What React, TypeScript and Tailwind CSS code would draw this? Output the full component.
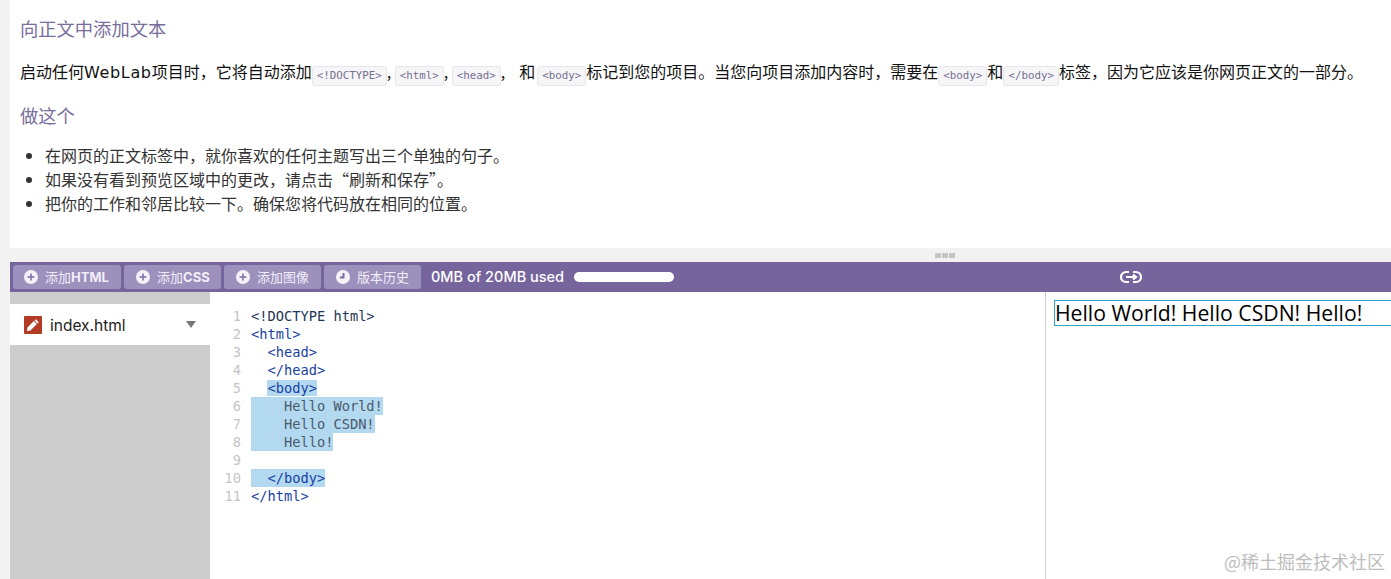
import React from 'react';
import { Plus } from 'lucide-react';

const CJK = '"Noto Sans CJK SC", sans-serif';

const toolbarButtons = [
  { label: '添加', bold: 'HTML', icon: 'plus', width: 'w-[108px]', pad: 'pl-[11px]' },
  { label: '添加', bold: 'CSS', icon: 'plus', width: 'w-[97px]', pad: 'pl-[12px]' },
  { label: '添加图像', bold: '', icon: 'plus', width: 'w-[97px]', pad: 'pl-[12px]' },
  { label: '版本历史', bold: '', icon: 'clock', width: 'w-[97px]', pad: 'pl-[12px]' },
];

const codeLines: { indent: string; text: string; kind: 'tag' | 'doc' | 'text'; sel?: 'text' | 'full' }[] = [
  { indent: '', text: '<!DOCTYPE html>', kind: 'doc' },
  { indent: '', text: '<html>', kind: 'tag' },
  { indent: '  ', text: '<head>', kind: 'tag' },
  { indent: '  ', text: '</head>', kind: 'tag' },
  { indent: '  ', text: '<body>', kind: 'tag', sel: 'text' },
  { indent: '    ', text: 'Hello World!', kind: 'text', sel: 'full' },
  { indent: '    ', text: 'Hello CSDN!', kind: 'text', sel: 'full' },
  { indent: '    ', text: 'Hello!', kind: 'text', sel: 'full' },
  { indent: '', text: '', kind: 'text' },
  { indent: '  ', text: '</body>', kind: 'tag', sel: 'full' },
  { indent: '', text: '</html>', kind: 'tag' },
];

const Code = ({ children }: { children: React.ReactNode }) => (
  <code className="inline-block h-[20px] px-[4px] align-[-1px] rounded-[3px] border border-[#e6e6ec] bg-[#f6f6f9] text-[10.8px] leading-[18px] text-[#75708f] font-['DejaVu_Sans_Mono',monospace]">
    {children}
  </code>
);

const ToolbarButton = ({ label, bold, icon, width, pad }: { label: string; bold: string; icon: string; width: string; pad: string }) => (
  <div className={`${width} ${pad} h-[24px] flex items-center rounded-[3px] bg-[#9c90bd] text-white text-[13px]`}>
    {icon === 'plus' ? (
      <span className="w-[14px] h-[14px] rounded-full bg-[#f4f2f8] flex items-center justify-center">
        <Plus className="w-[10px] h-[10px] text-[#7a6aa3]" strokeWidth={3.5} />
      </span>
    ) : (
      <svg className="w-[14px] h-[14px]" viewBox="0 0 14 14">
        <circle cx="7" cy="7" r="7" fill="#f4f2f8" />
        <path d="M7.5 3v4.4H4" fill="none" stroke="#7a6aa3" strokeWidth="2" />
      </svg>
    )}
    <span className="ml-[7px] whitespace-nowrap text-[#f1eef7]">
      {label}
      {bold && <span className="font-bold font-['Inter',sans-serif] text-[13px]">{bold}</span>}
    </span>
  </div>
);

const App = () => {
  return (
    <div className="w-[1391px] h-[579px] overflow-hidden relative flex flex-col bg-[#f2f2f2] pl-[10px]" style={{ fontFamily: CJK }}>
      {/* instructions */}
      <div className="h-[248px] shrink-0 bg-white px-[10px]">
        <h2 className="pt-[15px] text-[18.3px] leading-[26px] text-[#786d9c]">向正文中添加文本</h2>
        <p className="mt-[17px] text-[16px] leading-[26px] text-[#111] whitespace-nowrap">
          启动任何<span className="font-['DejaVu_Sans',sans-serif] tracking-[0.65px]">WebLab</span>项目时，它将自动添加<Code>&lt;!DOCTYPE&gt;</Code>,&nbsp;<Code>&lt;html&gt;</Code>,&nbsp;<Code>&lt;head&gt;</Code>,<span className="ml-[14px]">和</span><span className="ml-[2px]" /><Code>&lt;body&gt;</Code>标记到您的项目。当您向项目添加内容时，需要在<Code>&lt;body&gt;</Code>和<Code>&lt;/body&gt;</Code>标签，因为它应该是你网页正文的一部分。
        </p>
        <h2 className="mt-[16px] text-[18.3px] leading-[26px] text-[#786d9c]">做这个</h2>
        <ul className="mt-[15px] pl-[25px] list-disc text-[16px] leading-[24px] text-[#333]">
          <li>在网页的正文标签中，就你喜欢的任何主题写出三个单独的句子。</li>
          <li>如果没有看到预览区域中的更改，请点击“刷新和保存”。</li>
          <li>把你的工作和邻居比较一下。确保您将代码放在相同的位置。</li>
        </ul>
      </div>

      {/* resize handle */}
      <div className="h-[14px] shrink-0 flex items-center justify-center pl-[489px] gap-px">
        <span className="w-[6px] h-[5px] bg-[#c6c6c6]" />
        <span className="w-[6px] h-[5px] bg-[#c6c6c6]" />
        <span className="w-[6px] h-[5px] bg-[#c6c6c6]" />
      </div>

      {/* toolbar */}
      <div className="h-[30px] shrink-0 flex items-center bg-[#76659d] pl-[3px] gap-[3px]">
        {toolbarButtons.map((b) => (
          <ToolbarButton key={b.label + b.bold} {...b} />
        ))}
        <span className="ml-[7px] w-[133px] text-[14.5px] font-medium text-white whitespace-nowrap font-['Inter',sans-serif]">0MB of 20MB used</span>
        <span className="ml-[7px] w-[100px] h-[10px] rounded-full bg-white" />
        <svg className="ml-[443px] w-[22px] h-[14px]" viewBox="0 0 22 14" fill="none" stroke="#fff" strokeWidth="2.2">
          <path d="M9 2H6a5 5 0 0 0 0 10h3" />
          <path d="M13 2h3a5 5 0 0 1 0 10h-3" />
          <path d="M6 7h10M13 4.5l3 2.5-3 2.5" />
        </svg>
      </div>

      {/* workspace */}
      <div className="flex-1 flex min-h-0 bg-white">
        <div className="w-[200px] shrink-0 bg-[#cccccc] pt-[12px]">
          <div className="h-[41px] bg-white flex items-center pl-[14px] pr-[14px]">
            <span className="w-[18px] h-[18px] rounded-[1px] bg-[#b23c25] flex items-center justify-center">
              <svg className="w-[14px] h-[14px]" viewBox="0 0 14 14" fill="#fff">
                <path d="M9.8 1.2l3 3-1.2 1.2-3-3zM7.9 3.1l3 3-6.4 6.4-3.6.6.6-3.6z" />
              </svg>
            </span>
            <span className="ml-[8px] pt-[2px] text-[15.5px] text-[#222] font-['Inter',sans-serif]">index.html</span>
            <span className="ml-auto w-0 h-0 border-x-[5.5px] border-x-transparent border-t-[7px] border-t-[#777]" />
          </div>
        </div>

        <div className="w-[836px] shrink-0 pt-[15px] border-r border-[#cfcfcf] font-['DejaVu_Sans_Mono',monospace] text-[13.7px] leading-[18px]">
          {codeLines.map((line, i) => (
            <div key={i} className="flex h-[18px] whitespace-pre">
              <span className="w-[31px] shrink-0 text-right text-[#c5c5c5]">{i + 1}</span>
              <span className={`ml-[10px] ${line.sel === 'full' ? 'bg-[#b3d9f0]' : ''}`}>
                {line.indent}
                <span
                  className={`${line.sel === 'text' ? 'bg-[#b3d9f0]' : ''} ${
                    line.kind === 'tag' ? 'text-[#1a3fa3]' : line.kind === 'doc' ? 'text-[#1d3557]' : 'text-[#4a5a6a]'
                  }`}
                >
                  {line.text}
                </span>
              </span>
            </div>
          ))}
        </div>

        <div className="flex-1 pt-[8px] pl-[8px]">
          <div className="h-[26px] border border-[#2aa3cf] border-r-0 text-[21.2px] leading-[24px] text-black font-['Open_Sans',sans-serif] whitespace-nowrap">
            Hello World! Hello CSDN! Hello!
          </div>
        </div>
      </div>

      <span className="absolute right-[6px] bottom-[6px] text-[18px] leading-[24px] text-[#bdbdbd]">@稀土掘金技术社区</span>
    </div>
  );
};

export default App;
